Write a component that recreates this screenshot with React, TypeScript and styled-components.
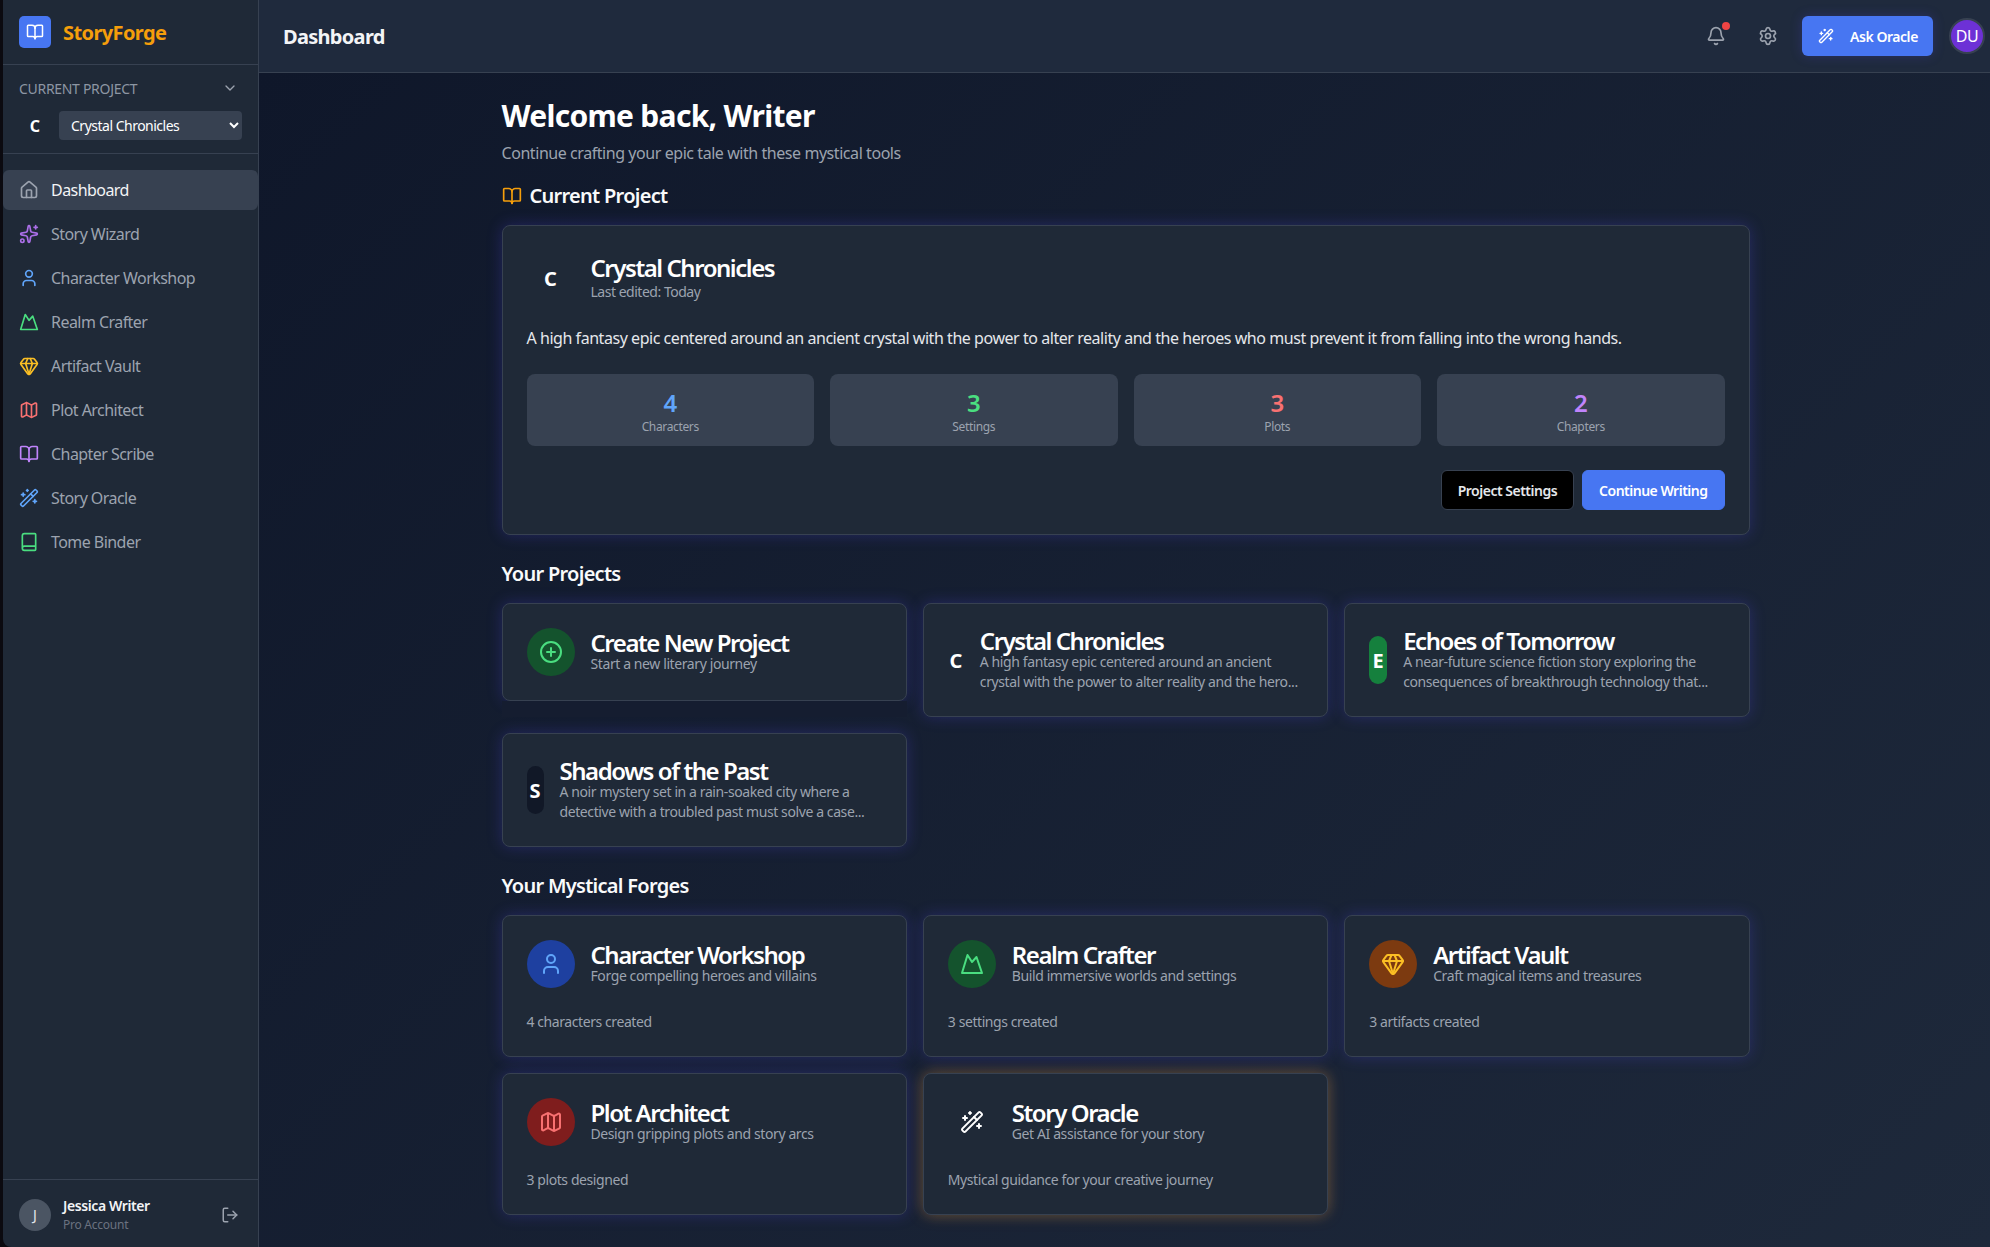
import React from "react";
import styled, { createGlobalStyle } from "styled-components";
import { BookOpen, Home, Sparkles, User, Gem, Map as MapIcon, WandSparkles, Book, ChevronDown, LogOut, Bell, Settings, CirclePlus } from "lucide-react";

const FONT = `"Noto Sans", "Open Sans", sans-serif`;

const Global = createGlobalStyle`
  html, body { margin: 0; padding: 0; height: 100%; background: #0b0a10; }
  body { overflow: hidden; font-family: ${FONT}; color: #fff; }
  * { box-sizing: border-box; }
`;

const Shell = styled.div`
  display: flex; width: 1990px; height: 1247px; padding-left: 3px; background: #0b0a10; overflow: hidden;
`;
const Sidebar = styled.aside`
  width: 256px; flex: none; display: flex; flex-direction: column; background: #1f2937;
  border-right: 1px solid #374151; border-bottom-left-radius: 8px;
`;
const Brand = styled.div`
  height: 65px; flex: none; display: flex; align-items: center; gap: 12px; padding: 0 16px; border-bottom: 1px solid #374151;
`;
const BrandMark = styled.div`
  width: 32px; height: 32px; border-radius: 5px; background: #4776f2; display: flex; align-items: center; justify-content: center; color: #fff;
`;
const BrandName = styled.div`
  font-size: 20px; font-weight: 700; color: #f59e0b; letter-spacing: -0.6px; line-height: 28px; margin-top: 2px;
`;
const ProjectBox = styled.div`
  height: 89px; flex: none; padding: 13px 16px 0; border-bottom: 1px solid #374151;
`;
const ProjectLabelRow = styled.div`
  display: flex; justify-content: space-between; align-items: center; height: 20px; color: #9ca3af; padding-right: 4px;
`;
const ProjectLabel = styled.span`
  font-size: 14px; letter-spacing: -0.3px; color: #8d96a3;
`;
const ProjectPick = styled.div`
  display: flex; align-items: center; gap: 8px; margin-top: 13px;
`;
const SelectLetter = styled.div`
  width: 32px; flex: none; text-align: center; font-size: 16px; font-weight: 700; line-height: 24px;
`;
const ProjectSelect = styled.select`
  flex: 1; min-width: 0; height: 29px; background: #374151; border: none; border-radius: 4px; color: #fff; padding: 0 4px 0 8px;
  font-family: ${FONT}; font-size: 14px; letter-spacing: -0.5px; outline: none;
`;
const Nav = styled.nav`
  display: flex; flex-direction: column; gap: 4px; padding-top: 16px; flex: 1;
`;
const NavItem = styled.div<{ $active?: boolean }>`
  height: 40px; display: flex; align-items: center; gap: 12px; padding: 0 16px; border-radius: 6px;
  font-size: 16px; letter-spacing: -0.55px; color: ${p => (p.$active ? "#f3f4f6" : "#9ca3af")};
  background: ${p => (p.$active ? "#374151" : "transparent")};
`;
const NavIcon = styled.span<{ $color: string }>`
  display: flex; color: ${p => p.$color};
`;
const UserBar = styled.div`
  height: 68px; flex: none; display: flex; align-items: center; gap: 12px; padding: 2px 19px 0 16px; border-top: 1px solid #374151; color: #9ca3af;
`;
const UserAvatar = styled.div`
  width: 32px; height: 32px; border-radius: 50%; background: #4b5563; display: flex; align-items: center; justify-content: center;
  font-size: 14px; color: #e5e7eb; flex: none;
`;
const UserInfo = styled.div`
  flex: 1; min-width: 0;
`;
const UserName = styled.div`
  font-size: 14px; font-weight: 600; line-height: 20px; color: #f3f4f6; letter-spacing: -0.4px;
`;
const UserPlan = styled.div`
  font-size: 12px; line-height: 16px; color: #6b7280; letter-spacing: -0.25px; margin-top: 1px;
`;
const Body = styled.div`
  flex: 1; min-width: 0; display: flex; flex-direction: column; height: 100%;
`;
const Header = styled.header`
  height: 73px; flex: none; display: flex; align-items: center; padding: 0 5px 0 24px; background: #1f2a3d; border-bottom: 1px solid #374151;
`;
const HeaderTitle = styled.h1`
  flex: 1; margin: 0; font-size: 20px; font-weight: 700; letter-spacing: -0.7px; color: #f3f4f6;
`;
const IconButton = styled.div`
  width: 40px; height: 40px; display: flex; align-items: center; justify-content: center; color: #9ca3af; position: relative;
`;
const RedDot = styled.span`
  position: absolute; top: 6px; right: 6px; width: 8px; height: 8px; border-radius: 50%; background: #ef4444;
`;
const HeaderActions = styled.div`
  display: flex; align-items: center; gap: 12px;
`;
const OracleButton = styled.div`
  width: 131px; height: 40px; margin-left: 2px; border-radius: 6px; background: #4776f2; display: flex; align-items: center; gap: 16px; padding-left: 16px;
  font-size: 14px; font-weight: 600; letter-spacing: -0.45px; box-shadow: 0 0 12px rgba(79,70,229,.25);
`;
const HeaderAvatar = styled.div`
  width: 36px; height: 36px; margin-left: 4px; border-radius: 50%; background: #6d31d6; border: 2px solid #374151; display: flex; align-items: center; justify-content: center;
  font-size: 16px; letter-spacing: -0.5px;
`;
const Main = styled.main`
  flex: 1; min-height: 0; overflow: hidden; background: linear-gradient(135deg, #0f172a, #1e293b);
  padding: 25px 0 0 2px;
`;
const Content = styled.div`
  width: 1248px; margin: 0 auto;
`;
const Welcome = styled.h2`
  margin: 0; font-size: 30px; line-height: 36px; font-weight: 700; letter-spacing: -0.7px; color: #fff;
`;
const Lead = styled.p`
  margin: 7px 0 0; font-size: 16px; line-height: 24px; color: #9ca3af; letter-spacing: -0.44px;
`;
const SectionTitle = styled.h3<{ $mt: number; $mb?: number }>`
  margin: ${p => p.$mt}px 0 ${p => p.$mb ?? 15}px; height: 28px; display: flex; align-items: center; gap: 8px;
  font-size: 20px; line-height: 28px; font-weight: 600; letter-spacing: -0.72px; color: #f9fafb;
`;
const Panel = styled.section`
  background: #1f2937; border: 1px solid #374151; border-radius: 8px; padding: 25px 24px 24px; box-shadow: 0 0 15px rgba(79,70,229,.28);
`;
const PanelHead = styled.div`
  display: flex; gap: 16px; padding-top: 3px; margin-bottom: 24px;
`;
const PanelLetter = styled.div`
  width: 48px; height: 48px; flex: none; display: flex; align-items: center; justify-content: center; font-size: 20px; font-weight: 700;
`;
const PanelTitleBox = styled.div`
  padding-top: 2px;
`;
const PanelTitle = styled.div`
  font-size: 24px; line-height: 24px; font-weight: 600; letter-spacing: -1.45px; color: #fff;
`;
const CardTitle = styled.div`
  font-size: 24px; line-height: 26px; margin-bottom: -2px; font-weight: 600; letter-spacing: -1.45px; color: #fff;
`;
const PanelMeta = styled.div`
  margin-top: 2px; font-size: 14px; line-height: 20px; color: #9ca3af; letter-spacing: -0.48px;
`;
const PanelText = styled.p`
  margin: 0 0 24px; font-size: 16px; line-height: 24px; color: #e5e7eb; letter-spacing: -0.455px;
`;
const Stats = styled.div`
  display: grid; grid-template-columns: repeat(4, 1fr); gap: 16px; margin-bottom: 24px;
`;
const Stat = styled.div`
  height: 72px; padding: 13px 12px 11px; background: #374151; border-radius: 8px; text-align: center;
`;
const StatNum = styled.div<{ $color: string }>`
  font-size: 24px; line-height: 32px; font-weight: 600; color: ${p => p.$color};
`;
const StatLabel = styled.div`
  font-size: 12px; line-height: 16px; color: #9ca3af; letter-spacing: -0.35px;
`;
const Actions = styled.div`
  display: flex; justify-content: flex-end; gap: 8px;
`;
const Btn = styled.div<{ $primary?: boolean }>`
  height: 40px; padding: 0 16px; display: flex; align-items: center; border-radius: 6px; font-size: 14px; font-weight: 600; letter-spacing: -0.5px;
  background: ${p => (p.$primary ? "#4776f2" : "#000")}; color: ${p => (p.$primary ? "#fff" : "#e5e7eb")};
  border: 1px solid ${p => (p.$primary ? "#4776f2" : "#374151")};
`;
const Grid = styled.div`
  display: grid; grid-template-columns: repeat(3, 1fr); gap: 16px;
`;
const Cell = styled.div`
  display: flex; flex-direction: column; min-width: 0;
`;
const Filler = styled.div`
  flex: 1; background: #151d30; position: relative; z-index: 1;
`;
const Card = styled.div<{ $oracle?: boolean }>`
  background: #1f2937; border: 1px solid #374151; border-radius: 8px; padding: 24px;
  box-shadow: ${p => (p.$oracle ? "0 0 15px rgba(245,158,11,.36), 0 0 15px rgba(79,70,229,.12)" : "0 0 15px rgba(79,70,229,.28)")};
`;
const CardHead = styled.div`
  display: flex; align-items: center; gap: 16px;
`;
const Badge = styled.div<{ $bg?: string; $w?: number; $fg?: string }>`
  width: ${p => p.$w ?? 48}px; height: 48px; flex: none; display: flex; align-items: center; justify-content: center;
  border-radius: 999px; background: ${p => p.$bg ?? "transparent"}; color: ${p => p.$fg ?? "#fff"};
  font-size: 20px; font-weight: 700;
`;
const CardText = styled.div`
  min-width: 0;
`;
const CardDesc = styled.div`
  font-size: 14px; line-height: 20px; color: #9ca3af; letter-spacing: -0.4px;
`;
const CardFoot = styled.div`
  margin-top: 24px; font-size: 14px; line-height: 20px; color: #9ca3af; letter-spacing: -0.42px;
`;

const RealmIcon = ({ size = 20 }: { size?: number }) => (
  <svg width={size} height={size} viewBox="0 0 24 24" fill="none" stroke="currentColor" strokeWidth={2} strokeLinecap="round" strokeLinejoin="round">
    <path d="M2 21 L7.5 3 L12 10 L16.5 5 L22 21 Z" />
  </svg>
);

const navItems: { label: string; color: string; icon: React.ReactNode; active?: boolean }[] = [
  { label: "Dashboard", color: "#9ca3af", icon: <Home size={20} />, active: true },
  { label: "Story Wizard", color: "#ab6fe8", icon: <Sparkles size={20} /> },
  { label: "Character Workshop", color: "#60a5fa", icon: <User size={20} /> },
  { label: "Realm Crafter", color: "#4ade80", icon: <RealmIcon /> },
  { label: "Artifact Vault", color: "#fbbf24", icon: <Gem size={20} /> },
  { label: "Plot Architect", color: "#f87171", icon: <MapIcon size={20} /> },
  { label: "Chapter Scribe", color: "#c084fc", icon: <BookOpen size={20} /> },
  { label: "Story Oracle", color: "#60a5fa", icon: <WandSparkles size={20} /> },
  { label: "Tome Binder", color: "#4ade80", icon: <Book size={20} /> },
];

const stats = [
  { n: "4", label: "Characters", color: "#60a5fa" },
  { n: "3", label: "Settings", color: "#4ade80" },
  { n: "3", label: "Plots", color: "#f87171" },
  { n: "2", label: "Chapters", color: "#c084fc" },
];

const forges = [
  { title: "Character Workshop", desc: "Forge compelling heroes and villains", foot: "4 characters created", bg: "#1e40a0", fg: "#60a5fa", icon: <User size={24} /> },
  { title: "Realm Crafter", desc: "Build immersive worlds and settings", foot: "3 settings created", bg: "#14532d", fg: "#4ade80", icon: <RealmIcon size={24} /> },
  { title: "Artifact Vault", desc: "Craft magical items and treasures", foot: "3 artifacts created", bg: "#7c3a10", fg: "#fbbf24", icon: <Gem size={24} /> },
  { title: "Plot Architect", desc: "Design gripping plots and story arcs", foot: "3 plots designed", bg: "#7f1d1d", fg: "#f87171", icon: <MapIcon size={24} /> },
  { title: "Story Oracle", desc: "Get AI assistance for your story", foot: "Mystical guidance for your creative journey", fg: "#fff", icon: <WandSparkles size={24} />, oracle: true },
];

export default function App() {
  return (
    <>
      <Global />
      <Shell>
        <Sidebar>
          <Brand>
            <BrandMark><BookOpen size={18} /></BrandMark>
            <BrandName>StoryForge</BrandName>
          </Brand>
          <ProjectBox>
            <ProjectLabelRow>
              <ProjectLabel>CURRENT PROJECT</ProjectLabel>
              <ChevronDown size={16} />
            </ProjectLabelRow>
            <ProjectPick>
              <SelectLetter>C</SelectLetter>
              <ProjectSelect defaultValue="Crystal Chronicles">
                <option>Crystal Chronicles</option>
                <option>Echoes of Tomorrow</option>
                <option>Shadows of the Past</option>
              </ProjectSelect>
            </ProjectPick>
          </ProjectBox>
          <Nav>
            {navItems.map(item => (
              <NavItem key={item.label} $active={item.active}>
                <NavIcon $color={item.color}>{item.icon}</NavIcon>
                {item.label}
              </NavItem>
            ))}
          </Nav>
          <UserBar>
            <UserAvatar>J</UserAvatar>
            <UserInfo>
              <UserName>Jessica Writer</UserName>
              <UserPlan>Pro Account</UserPlan>
            </UserInfo>
            <LogOut size={18} />
          </UserBar>
        </Sidebar>
        <Body>
          <Header>
            <HeaderTitle>Dashboard</HeaderTitle>
            <HeaderActions>
              <IconButton><Bell size={20} /><RedDot /></IconButton>
              <IconButton><Settings size={20} /></IconButton>
              <OracleButton><WandSparkles size={16} />Ask Oracle</OracleButton>
              <HeaderAvatar>DU</HeaderAvatar>
            </HeaderActions>
          </Header>
          <Main>
            <Content>
              <Welcome>Welcome back, Writer</Welcome>
              <Lead>Continue crafting your epic tale with these mystical tools</Lead>
              <SectionTitle $mt={17}><BookOpen size={20} color="#f59e0b" />Current Project</SectionTitle>
              <Panel>
                <PanelHead>
                  <PanelLetter>C</PanelLetter>
                  <PanelTitleBox>
                    <PanelTitle>Crystal Chronicles</PanelTitle>
                    <PanelMeta>Last edited: Today</PanelMeta>
                  </PanelTitleBox>
                </PanelHead>
                <PanelText>A high fantasy epic centered around an ancient crystal with the power to alter reality and the heroes who must prevent it from falling into the wrong hands.</PanelText>
                <Stats>
                  {stats.map(s => (
                    <Stat key={s.label}>
                      <StatNum $color={s.color}>{s.n}</StatNum>
                      <StatLabel>{s.label}</StatLabel>
                    </Stat>
                  ))}
                </Stats>
                <Actions>
                  <Btn>Project Settings</Btn>
                  <Btn $primary>Continue Writing</Btn>
                </Actions>
              </Panel>
              <SectionTitle $mt={25}>Your Projects</SectionTitle>
              <Grid>
                <Cell>
                  <Card>
                    <CardHead>
                      <Badge $bg="#14532d" $fg="#4ade80"><CirclePlus size={24} /></Badge>
                      <CardText>
                        <CardTitle>Create New Project</CardTitle>
                        <CardDesc>Start a new literary journey</CardDesc>
                      </CardText>
                    </CardHead>
                  </Card>
                  <Filler />
                </Cell>
                <Card>
                  <CardHead>
                    <Badge $w={16}>C</Badge>
                    <CardText>
                      <CardTitle>Crystal Chronicles</CardTitle>
                      <CardDesc>A high fantasy epic centered around an ancient<br />crystal with the power to alter reality and the hero...</CardDesc>
                    </CardText>
                  </CardHead>
                </Card>
                <Card>
                  <CardHead>
                    <Badge $w={18} $bg="#15803d">E</Badge>
                    <CardText>
                      <CardTitle>Echoes of Tomorrow</CardTitle>
                      <CardDesc>A near-future science fiction story exploring the<br />consequences of breakthrough technology that...</CardDesc>
                    </CardText>
                  </CardHead>
                </Card>
                <Card>
                  <CardHead>
                    <Badge $w={17} $bg="#111827">S</Badge>
                    <CardText>
                      <CardTitle>Shadows of the Past</CardTitle>
                      <CardDesc>A noir mystery set in a rain-soaked city where a<br />detective with a troubled past must solve a case...</CardDesc>
                    </CardText>
                  </CardHead>
                </Card>
              </Grid>
              <SectionTitle $mt={25}>Your Mystical Forges</SectionTitle>
              <Grid>
                {forges.map(f => (
                  <Card key={f.title} $oracle={f.oracle}>
                    <CardHead>
                      <Badge $bg={f.bg} $fg={f.fg}>{f.icon}</Badge>
                      <CardText>
                        <CardTitle>{f.title}</CardTitle>
                        <CardDesc>{f.desc}</CardDesc>
                      </CardText>
                    </CardHead>
                    <CardFoot>{f.foot}</CardFoot>
                  </Card>
                ))}
              </Grid>
            </Content>
          </Main>
        </Body>
      </Shell>
    </>
  );
}
